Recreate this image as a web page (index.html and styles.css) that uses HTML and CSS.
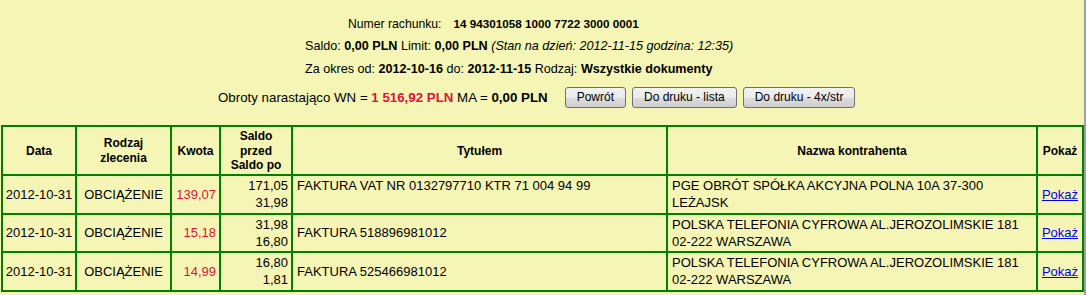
FILE: index.html
```html
<!DOCTYPE html>
<html lang="pl">
<head>
<meta charset="utf-8">
<title>Historia rachunku</title>
<link rel="stylesheet" href="styles.css">
</head>
<body>
<div class="page">
  <div class="info">
    <div class="line line-account"><span>Numer rachunku:</span><b class="acct">14 94301058 1000 7722 3000 0001</b></div>
    <div class="line line-mid">Saldo: <b>0,00 PLN</b> Limit: <b>0,00 PLN</b> <i>(Stan na dzień: 2012-11-15 godzina: 12:35)</i></div>
    <div class="line line-mid">Za okres od: <b>2012-10-16</b> do: <b>2012-11-15</b> Rodzaj: <b>Wszystkie dokumenty</b></div>
    <div class="line line-totals">
      <span>Obroty narastająco WN = <b class="red">1 516,92 PLN</b> MA = <b>0,00 PLN</b></span>
      <button class="btn btn-first" type="button">Powrót</button>
      <button class="btn" type="button">Do druku - lista</button>
      <button class="btn" type="button">Do druku - 4x/str</button>
    </div>
  </div>
  <table class="ops">
    <colgroup>
      <col class="c-data">
      <col class="c-rodzaj">
      <col class="c-kwota">
      <col class="c-saldo">
      <col class="c-tytul">
      <col class="c-nazwa">
      <col class="c-pokaz">
    </colgroup>
    <thead>
      <tr>
        <th>Data</th>
        <th>Rodzaj<br>zlecenia</th>
        <th>Kwota</th>
        <th>Saldo<br>przed<br>Saldo po</th>
        <th>Tytułem</th>
        <th>Nazwa kontrahenta</th>
        <th>Pokaż</th>
      </tr>
    </thead>
    <tbody>
      <tr>
        <td class="center">2012-10-31</td>
        <td class="center">OBCIĄŻENIE</td>
        <td class="num red">139,07</td>
        <td class="num">171,05<br>31,98</td>
        <td>FAKTURA VAT NR 0132797710 KTR 71 004 94 99<br>&nbsp;</td>
        <td>PGE OBRÓT SPÓŁKA AKCYJNA POLNA 10A 37-300<br>LEŻAJSK</td>
        <td class="center"><a href="#">Pokaż</a></td>
      </tr>
      <tr>
        <td class="center">2012-10-31</td>
        <td class="center">OBCIĄŻENIE</td>
        <td class="num red">15,18</td>
        <td class="num">31,98<br>16,80</td>
        <td>FAKTURA 518896981012</td>
        <td>POLSKA TELEFONIA CYFROWA AL.JEROZOLIMSKIE 181<br>02-222 WARSZAWA</td>
        <td class="center"><a href="#">Pokaż</a></td>
      </tr>
      <tr>
        <td class="center">2012-10-31</td>
        <td class="center">OBCIĄŻENIE</td>
        <td class="num red">14,99</td>
        <td class="num">16,80<br>1,81</td>
        <td>FAKTURA 525466981012</td>
        <td>POLSKA TELEFONIA CYFROWA AL.JEROZOLIMSKIE 181<br>02-222 WARSZAWA</td>
        <td class="center"><a href="#">Pokaż</a></td>
      </tr>
    </tbody>
  </table>
</div>
</body>
</html>
```

FILE: styles.css
```css
html, body {
  margin: 0;
  padding: 0;
  background: #ffffff;
}

body {
  font-family: "Liberation Sans", Arial, sans-serif;
  font-size: 12px;
  color: #000;
}

.page {
  width: 1084px;
  min-height: 295px;
  background: #f5f5b5;
  border-right: 2px solid #a0a0a0;
  overflow: hidden;
}

.info {
  padding-top: 12px;
  display: flex;
  flex-direction: column;
  align-items: flex-start;
}

.line {
  height: 23px;
  line-height: 23px;
  margin-left: 305px;
  white-space: nowrap;
}

.line-account {
  margin-left: 348px;
  font-size: 12.2px;
}

.line-mid {
  font-size: 12.6px;
}

.acct {
  margin-left: 12px;
  font-size: 11.7px;
}

.line-totals {
  margin-left: 218px;
  height: 32px;
  display: flex;
  align-items: center;
  margin-bottom: 12px;
  font-size: 13.3px;
}

.red {
  color: #dc143c;
}

.btn {
  font-family: "Liberation Sans", Arial, sans-serif;
  font-size: 12px;
  height: 21px;
  padding: 0 11px;
  margin: 0 0 0 6px;
  border: 1px solid #707070;
  border-radius: 3px;
  background: linear-gradient(#f2f2f2 0%, #ebebeb 50%, #dddddd 51%, #cfcfcf 100%);
  color: #000;
  line-height: 19px;
}

.btn-first {
  margin-left: 17px;
}

.ops {
  margin-left: 1px;
  width: 1083px;
  table-layout: fixed;
  border-collapse: separate;
  border-spacing: 0;
  border: 1px solid #008000;
  font-size: 13px;
}

.c-data { width: 74px; }
.c-rodzaj { width: 95px; }
.c-kwota { width: 49px; }
.c-saldo { width: 72px; }
.c-tytul { width: 375px; }
.c-nazwa { width: 370px; }
.c-pokaz { width: 46px; }

.ops th,
.ops td {
  border: 1px solid #008000;
  vertical-align: middle;
}

.ops th {
  font-size: 12px;
  font-weight: bold;
  line-height: 14.5px;
  padding: 2px 2px 1.5px;
  text-align: center;
}

.ops td {
  line-height: 17px;
  padding: 1px 3px 1.5px 4px;
  text-align: left;
  white-space: nowrap;
  overflow: hidden;
}

.ops td.center {
  text-align: center;
  padding-left: 2px;
  padding-right: 2px;
}

.ops td.num {
  text-align: right;
  padding-right: 3px;
}

.ops a {
  color: #0000ee;
  text-decoration: underline;
}
```
